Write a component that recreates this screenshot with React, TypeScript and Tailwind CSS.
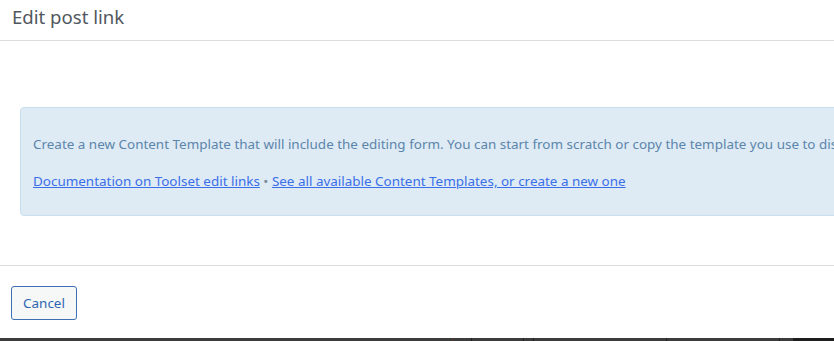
export default function App() {
  return (
    <div
      className="flex h-[341px] w-[834px] flex-col overflow-hidden bg-white"
      style={{ fontFamily: '"Noto Sans", "Open Sans", sans-serif' }}
    >
      <div className="flex h-[41px] shrink-0 items-center border-b border-[#dcdcde] px-3 pb-[7px]">
        <h1 className="text-[18.6px] font-normal text-[#50575e]">Edit post link</h1>
      </div>

      <div className="h-[224px] shrink-0 overflow-hidden pl-5 pt-[66px]">
        <div className="h-[109px] w-[900px] rounded-[4px] border border-[#c8dfed] bg-[#deebf5] px-3 pt-[26px] text-[13.45px] leading-[20px] text-[#5c85ab]">
          <p className="whitespace-nowrap">
            Create a new Content Template that will include the editing form. You can start from scratch or copy the
            template you use to display the post.
          </p>
          <p className="mt-[17px] whitespace-nowrap">
            <a href="#" className="text-[#3a6fe8] underline">
              Documentation on Toolset edit links
            </a>{" "}
            <span className="text-[#7c8a99]">•</span>{" "}
            <a href="#" className="text-[#3a6fe8] underline">
              See all available Content Templates, or create a new one
            </a>
          </p>
        </div>
      </div>

      <div className="flex flex-1 border-t border-[#dcdcde] px-[11px] pt-5">
        <button className="h-[34px] w-[66px] rounded-[3px] border border-[#3d6fb6] bg-[#f6f7f7] text-[13.45px] text-[#2f66b3]">
          Cancel
        </button>
      </div>

      <div className="flex h-[3px] shrink-0 bg-[#3c3c3c]">
        <div className="w-[452px]" />
        <div className="w-px bg-[#5a3a2a]" />
        <div className="w-[18px]" />
        <div className="w-px bg-[#222]" />
        <div className="w-[51px]" />
        <div className="w-px bg-[#222]" />
        <div className="w-[9px]" />
        <div className="w-px bg-[#222]" />
        <div className="w-[132px]" />
        <div className="w-px bg-[#222]" />
        <div className="w-[112px]" />
        <div className="w-px bg-[#222]" />
        <div className="w-[13px]" />
        <div className="flex-1 bg-[#1e1e1e]" />
      </div>
    </div>
  );
}
